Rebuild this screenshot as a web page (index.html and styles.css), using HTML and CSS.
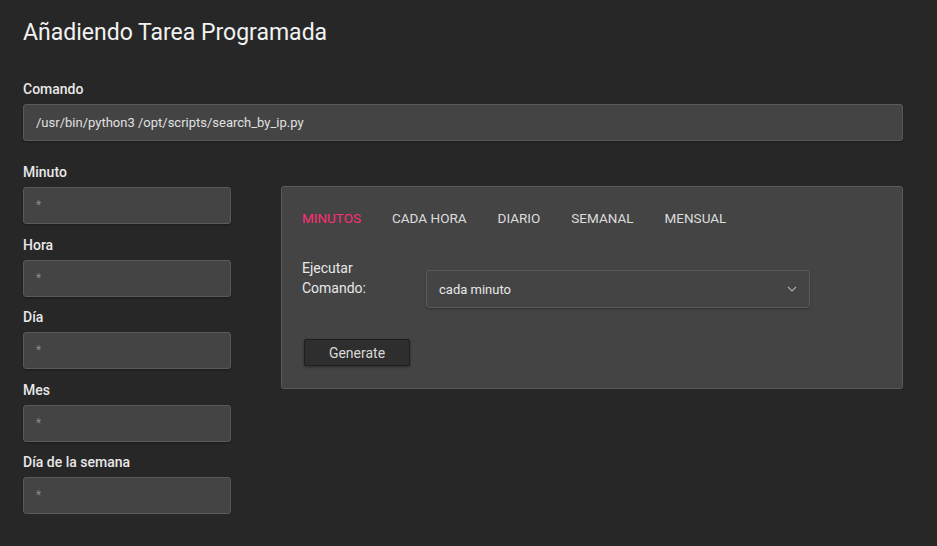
FILE: index.html
```html
<!DOCTYPE html>
<html lang="es">
<head>
  <meta charset="UTF-8" />
  <title>Añadiendo Tarea Programada</title>
  <link rel="stylesheet" href="styles.css">
</head>
<body>
  <div class="page">
    <h2 class="title">Añadiendo Tarea Programada</h2>

    <div class="field">
      <label>Comando</label>
      <div class="input">/usr/bin/python3 /opt/scripts/search_by_ip.py</div>
    </div>

    <div class="row">
      <div class="fields">
        <div class="field">
          <label>Minuto</label>
          <div class="input small">*</div>
        </div>
        <div class="field">
          <label>Hora</label>
          <div class="input small">*</div>
        </div>
        <div class="field">
          <label>Día</label>
          <div class="input small">*</div>
        </div>
        <div class="field">
          <label>Mes</label>
          <div class="input small">*</div>
        </div>
        <div class="field">
          <label>Día de la semana</label>
          <div class="input small">*</div>
        </div>
      </div>

      <div class="panel">
        <div class="tabs">
          <span class="tab active">MINUTOS</span>
          <span class="tab">CADA HORA</span>
          <span class="tab">DIARIO</span>
          <span class="tab">SEMANAL</span>
          <span class="tab">MENSUAL</span>
        </div>
        <div class="exec">
          <div class="exec-label">Ejecutar<br>Comando:</div>
          <div class="select">
            <span>cada minuto</span>
            <svg width="10" height="6" viewBox="0 0 10 6"><path d="M1 1l4 4 4-4" fill="none" stroke="#aaa" stroke-width="1.2"/></svg>
          </div>
        </div>
        <button class="gen">Generate</button>
      </div>
    </div>
  </div>
</body>
</html>
```

FILE: styles.css
```css
:root {
  --bg: #272727;
  --card: #444444;
  --border: #5a5a5a;
  --text: #e8e8e8;
  --accent: #ff2e74;
}

body {
  margin: 0;
  background: var(--bg);
  color: var(--text);
  font-family: Roboto, "Noto Sans", sans-serif;
}

.page {
  padding: 17px 34px 0 23px;
}

.title {
  margin: 0 0 30px;
  font-size: 23px;
  font-weight: 400;
  color: #f2f2f2;
  line-height: 32px;
}

.field label {
  display: block;
  font-size: 14px;
  font-weight: 500;
  line-height: 20px;
  margin-bottom: 5px;
}

.input {
  height: 35px;
  line-height: 35px;
  padding: 0 12px;
  background: var(--card);
  border: 1px solid var(--border);
  border-radius: 3px;
  font-size: 13px;
  color: #e0e0e0;
  box-shadow: 0 1px 2px rgba(0,0,0,0.3);
}

.input.small {
  color: #8a8a8a;
  font-size: 12px;
}

.row {
  display: flex;
  gap: 50px;
  margin-top: 21px;
}

.fields {
  width: 208px;
  display: flex;
  flex-direction: column;
  gap: 10.5px;
}

.panel {
  flex: 1;
  align-self: flex-start;
  margin-top: 24px;
  background: var(--card);
  border: 1px solid var(--border);
  border-radius: 3px;
  padding: 21px 20px 22px;
}

.tabs {
  display: flex;
  gap: 31px;
  font-size: 13.5px;
  font-weight: 400;
  line-height: 20px;
  color: #dcdcdc;
}

.tab.active {
  color: var(--accent);
}

.exec {
  display: flex;
  align-items: flex-start;
  margin-top: 42px;
}

.exec-label {
  width: 124px;
  font-size: 14px;
  line-height: 20px;
  margin-top: -12px;
}

.select {
  width: 358px;
  height: 36px;
  padding: 0 12px;
  display: flex;
  align-items: center;
  justify-content: space-between;
  background: var(--card);
  border: 1px solid var(--border);
  border-radius: 3px;
  font-size: 13px;
  box-shadow: 0 1px 2px rgba(0,0,0,0.3);
}

.gen {
  display: block;
  margin-top: 31px;
  margin-left: 2px;
  width: 106px;
  height: 27px;
  background: #2e2e2e;
  border: 1px solid #1f1f1f;
  border-radius: 2px;
  color: #d8d8d8;
  font-family: inherit;
  font-size: 14px;
  box-shadow: 0 1px 3px rgba(0,0,0,0.4);
}
```
